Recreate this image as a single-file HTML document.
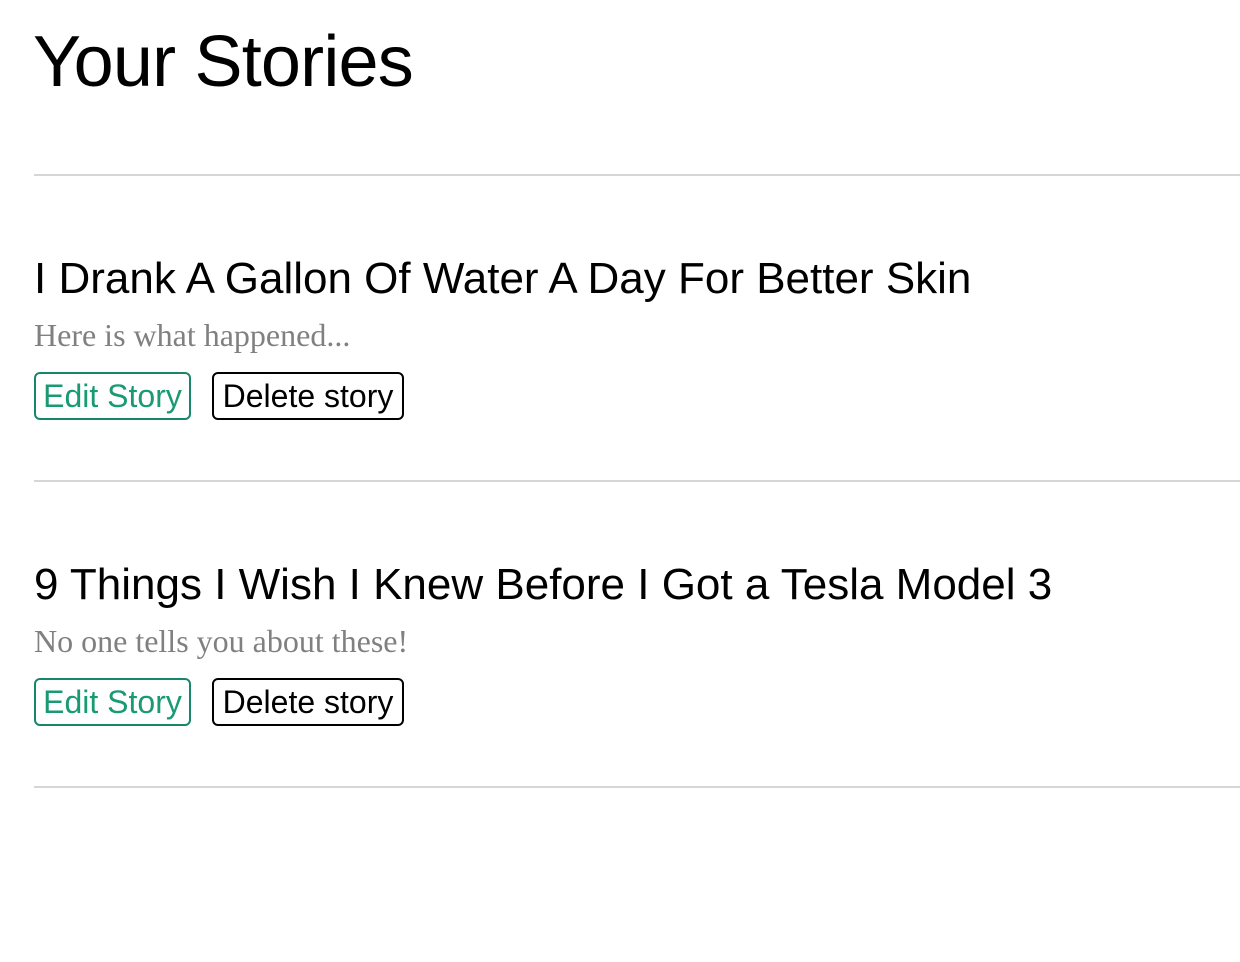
<!DOCTYPE html>
<html><head><meta charset="utf-8"><style>
body{margin:0;background:#fff;width:1240px;height:962px;position:relative;overflow:hidden;font-family:"Liberation Sans",sans-serif;}
.a{position:absolute;white-space:nowrap;}
h1{position:absolute;left:33px;top:17px;margin:0;font-weight:normal;font-size:72px;letter-spacing:-0.8px;line-height:90px;color:#000;}
.hr{position:absolute;left:34px;right:0;height:2px;background:#d6d6d6;}
.t{font-size:44px;line-height:50px;color:#000;left:34px;}
.s{font-family:"Liberation Serif",serif;font-size:32px;color:#808080;left:34px;line-height:36px;}
.b{position:absolute;height:44px;border:2px solid #000;border-radius:6px;font-size:32px;line-height:44px;text-align:center;box-sizing:content-box;}
.e{left:34px;width:153px;border-color:#17866a;color:#1a9a73;}
.d{left:212px;width:188px;color:#000;}
</style></head><body>
<h1>Your Stories</h1>
<div class="hr" style="top:174px"></div>
<div class="a t" style="top:254px">I Drank A Gallon Of Water A Day For Better Skin</div>
<div class="a s" style="top:317px">Here is what happened...</div>
<div class="b e" style="top:372px">Edit Story</div>
<div class="b d" style="top:372px">Delete story</div>
<div class="hr" style="top:480px"></div>
<div class="a t" style="top:560px">9 Things I Wish I Knew Before I Got a Tesla Model 3</div>
<div class="a s" style="top:623px">No one tells you about these!</div>
<div class="b e" style="top:678px">Edit Story</div>
<div class="b d" style="top:678px">Delete story</div>
<div class="hr" style="top:786px"></div>
</body></html>
